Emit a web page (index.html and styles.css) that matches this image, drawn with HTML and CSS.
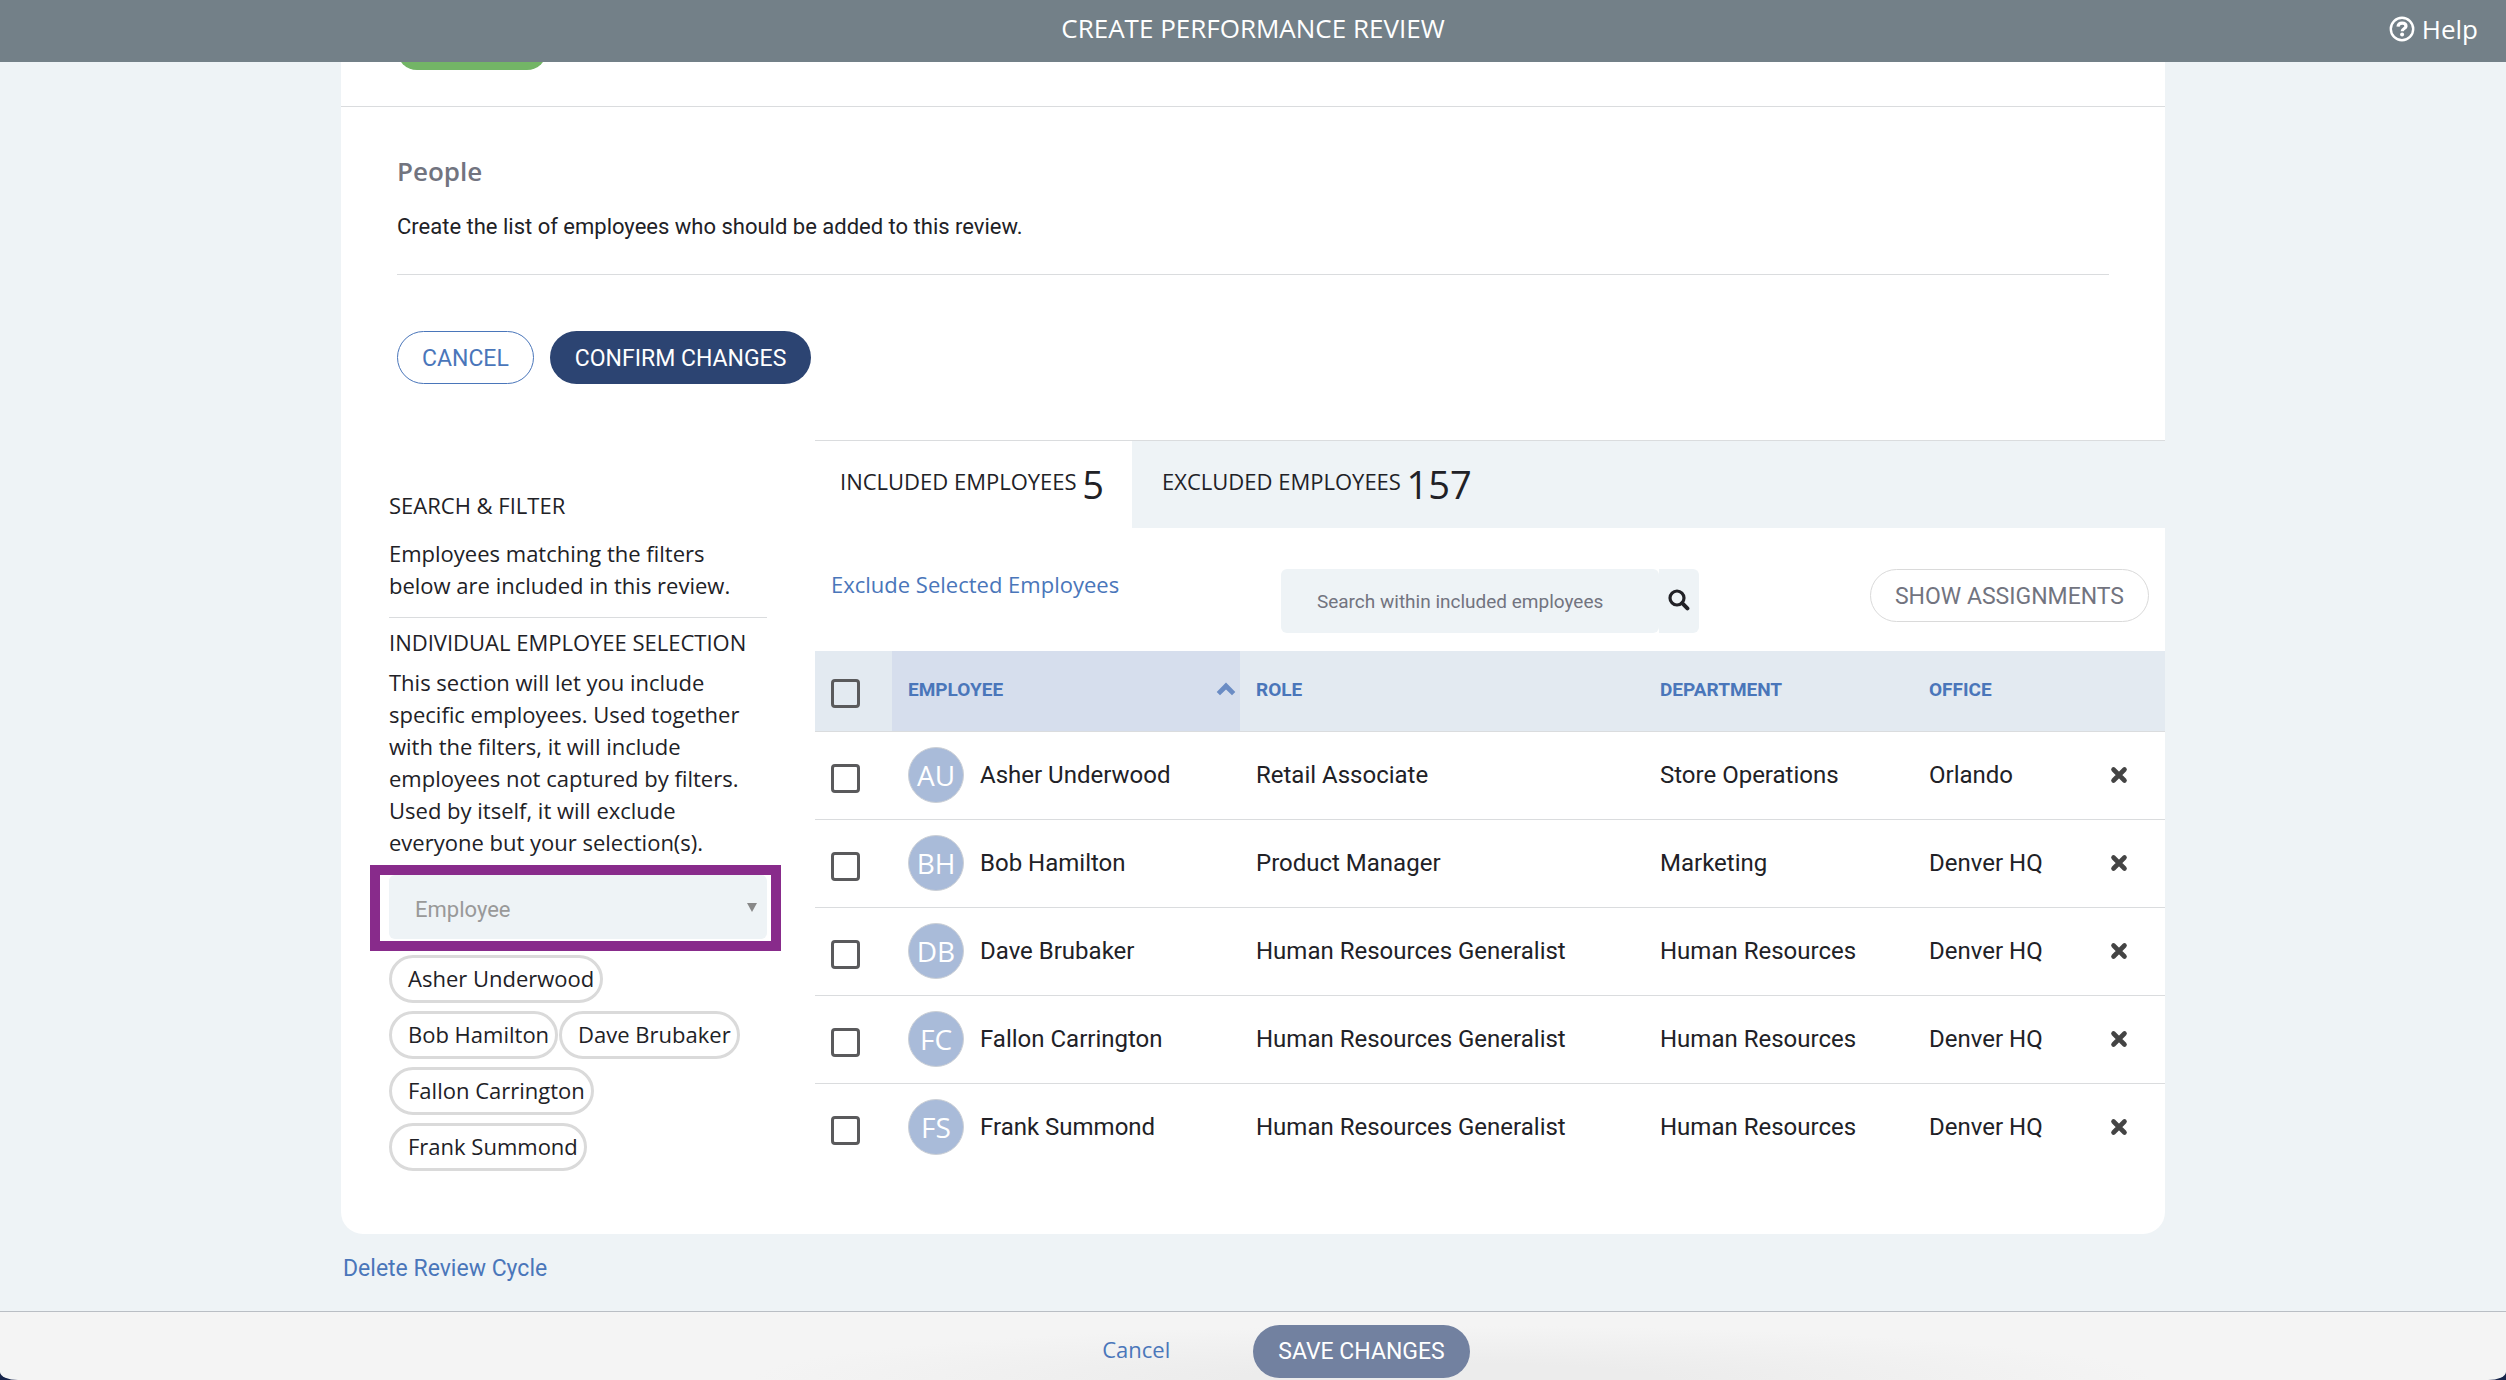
FILE: index.html
```html
<!DOCTYPE html>
<html lang="en">

<head>
    <meta charset="UTF-8">
    <meta name="viewport" content="width=device-width, initial-scale=1.0">
    <title>Create Performance Review</title>
    <link rel="stylesheet" href="styles.css">
</head>

<body>
    <svg width="0" height="0" class="sprite" aria-hidden="true">
        <symbol id="icon-x" viewBox="0 0 18 18">
            <path d="M3.5 3.5 L14.5 14.5 M14.5 3.5 L3.5 14.5" fill="none" stroke="currentColor" stroke-width="4.6" stroke-linecap="round" />
        </symbol>
    </svg>

    <header class="top-bar">
        <h1 class="top-title">CREATE PERFORMANCE REVIEW</h1>
        <a href="#" class="help-link">
            <svg width="26" height="26" viewBox="0 0 26 26" fill="none" stroke="currentColor" aria-hidden="true">
                <circle cx="13" cy="13" r="11.2" stroke-width="2.4" />
                <path d="M9 10.6 C9.3 8.1 11 7.2 13.1 7.2 C15.4 7.2 17 8.4 17 10.2 C17 12.6 13.2 12.4 13.2 15.2" stroke-width="3.2" />
                <circle cx="13.1" cy="18.6" r="2" fill="currentColor" stroke="none" />
            </svg>
            Help
        </a>
    </header>

    <main class="page">
        <div class="card">
            <div class="prev-section">
                <span class="green-btn"></span>
            </div>

            <section class="people">
                <h2 class="section-title">People</h2>
                <p class="section-text">Create the list of employees who should be added to this review.</p>
                <div class="actions">
                    <button type="button" class="btn btn-outline">CANCEL</button>
                    <button type="button" class="btn btn-primary">CONFIRM CHANGES</button>
                </div>
            </section>

            <div class="columns">
                <aside class="filters">
                    <h3 class="filter-title">SEARCH &amp; FILTER</h3>
                    <p class="filter-intro">Employees matching the filters below are included in this review.</p>
                    <h3 class="filter-title">INDIVIDUAL EMPLOYEE SELECTION</h3>
                    <p class="filter-text">This section will let you include specific employees. Used together with the filters, it will include employees not captured by filters. Used by itself, it will exclude everyone but your selection(s).</p>
                    <div class="highlight">
                        <select class="employee-select" aria-label="Employee">
                            <option>Employee</option>
                        </select>
                        <svg class="caret" width="10" height="9" viewBox="0 0 10 9" aria-hidden="true">
                            <path d="M0 0 H10 L5 9 Z" fill="#888" />
                        </svg>
                    </div>
                    <ul class="chips">
                        <li class="chip">Asher Underwood</li>
                        <li class="chip">Bob Hamilton</li>
                        <li class="chip">Dave Brubaker</li>
                        <li class="chip">Fallon Carrington</li>
                        <li class="chip">Frank Summond</li>
                    </ul>
                </aside>

                <section class="employees">
                    <nav class="tabs">
                        <a href="#" class="tab active">INCLUDED EMPLOYEES <span class="count">5</span></a>
                        <a href="#" class="tab">EXCLUDED EMPLOYEES <span class="count">157</span></a>
                    </nav>

                    <div class="toolbar">
                        <a href="#" class="exclude-link">Exclude Selected Employees</a>
                        <form class="search">
                            <input type="text" class="search-input" placeholder="Search within included employees" aria-label="Search within included employees">
                            <button type="submit" class="search-btn" aria-label="Search">
                                <svg width="22" height="22" viewBox="0 0 22 22" fill="none" stroke="currentColor" aria-hidden="true">
                                    <circle cx="9" cy="9" r="7" stroke-width="3.2" />
                                    <path d="M14.2 14.2 L19.4 19.4" stroke-width="4" stroke-linecap="round" />
                                </svg>
                            </button>
                        </form>
                        <button type="button" class="btn btn-grey">SHOW ASSIGNMENTS</button>
                    </div>

                    <table class="table">
                        <thead>
                            <tr>
                                <th class="col-check"><input type="checkbox" class="check" aria-label="Select all"></th>
                                <th class="col-employee">
                                    <div class="sort">
                                        EMPLOYEE
                                        <svg width="20" height="14" viewBox="0 0 20 14" aria-hidden="true">
                                            <path d="M10 0.5 L19.3 10 L16 13.3 L10 7.4 L4 13.3 L0.7 10 Z" fill="#6b8cc4" />
                                        </svg>
                                    </div>
                                </th>
                                <th class="col-role">ROLE</th>
                                <th class="col-dept">DEPARTMENT</th>
                                <th class="col-office">OFFICE</th>
                                <th></th>
                            </tr>
                        </thead>
                        <tbody>
                            <tr>
                                <td><input type="checkbox" class="check" aria-label="Select Asher Underwood"></td>
                                <td><div class="person"><span class="avatar">AU</span>Asher Underwood</div></td>
                                <td>Retail Associate</td>
                                <td>Store Operations</td>
                                <td>Orlando</td>
                                <td><button type="button" class="remove" aria-label="Remove Asher Underwood"><svg width="18" height="18"><use href="#icon-x" /></svg></button></td>
                            </tr>
                            <tr>
                                <td><input type="checkbox" class="check" aria-label="Select Bob Hamilton"></td>
                                <td><div class="person"><span class="avatar">BH</span>Bob Hamilton</div></td>
                                <td>Product Manager</td>
                                <td>Marketing</td>
                                <td>Denver HQ</td>
                                <td><button type="button" class="remove" aria-label="Remove Bob Hamilton"><svg width="18" height="18"><use href="#icon-x" /></svg></button></td>
                            </tr>
                            <tr>
                                <td><input type="checkbox" class="check" aria-label="Select Dave Brubaker"></td>
                                <td><div class="person"><span class="avatar">DB</span>Dave Brubaker</div></td>
                                <td>Human Resources Generalist</td>
                                <td>Human Resources</td>
                                <td>Denver HQ</td>
                                <td><button type="button" class="remove" aria-label="Remove Dave Brubaker"><svg width="18" height="18"><use href="#icon-x" /></svg></button></td>
                            </tr>
                            <tr>
                                <td><input type="checkbox" class="check" aria-label="Select Fallon Carrington"></td>
                                <td><div class="person"><span class="avatar">FC</span>Fallon Carrington</div></td>
                                <td>Human Resources Generalist</td>
                                <td>Human Resources</td>
                                <td>Denver HQ</td>
                                <td><button type="button" class="remove" aria-label="Remove Fallon Carrington"><svg width="18" height="18"><use href="#icon-x" /></svg></button></td>
                            </tr>
                            <tr>
                                <td><input type="checkbox" class="check" aria-label="Select Frank Summond"></td>
                                <td><div class="person"><span class="avatar">FS</span>Frank Summond</div></td>
                                <td>Human Resources Generalist</td>
                                <td>Human Resources</td>
                                <td>Denver HQ</td>
                                <td><button type="button" class="remove" aria-label="Remove Frank Summond"><svg width="18" height="18"><use href="#icon-x" /></svg></button></td>
                            </tr>
                        </tbody>
                    </table>
                </section>
            </div>
        </div>
        <a href="#" class="delete-link">Delete Review Cycle</a>
    </main>

    <footer class="bottom-bar">
        <a href="#" class="cancel-link">Cancel</a>
        <button type="button" class="btn btn-save">SAVE CHANGES</button>
    </footer>
</body>

</html>
```
FILE: styles.css
```css
* {
    margin: 0;
    padding: 0;
    box-sizing: border-box;
}

html {
    background: #16244a;
}

body {
    font-family: 'Open Sans', sans-serif;
    font-size: 22px;
    color: #212126;
    min-height: 100vh;
    display: flex;
    flex-direction: column;
}

a {
    color: #4a76ba;
    text-decoration: none;
}

.sprite {
    position: absolute;
}

/* top bar */
.top-bar {
    position: sticky;
    top: 0;
    z-index: 10;
    height: 62px;
    flex: none;
    background: #738088;
    color: #fff;
    display: grid;
    grid-template-columns: 1fr auto 1fr;
    align-items: center;
    padding: 0 28px 4px;
}

.top-title {
    grid-column: 2;
    font-size: 26px;
    line-height: 32px;
    font-weight: 400;
    padding-bottom: 2px;
}

.help-link {
    justify-self: end;
    display: flex;
    align-items: center;
    gap: 7px;
    color: #fff;
    font-size: 26px;
}

/* card */
.page {
    flex: 1;
    background: #eef3f6;
    padding: 0 24px 24px;
}

.card {
    max-width: 1824px;
    margin: 0 auto;
    background: #fff;
    border-radius: 0 0 22px 22px;
}

.prev-section {
    display: flex;
    height: 45px;
    border-bottom: 1px solid #dadcde;
    padding-left: 56px;
}

.green-btn {
    width: 150px;
    height: 53px;
    margin-top: -45px;
    border-radius: 20px;
    background: #73b566;
}

.people {
    padding: 45px 56px 56px;
}

.section-title {
    font-size: 26px;
    line-height: 38px;
    font-weight: 600;
    color: #72747f;
}

.section-text {
    font-family: Roboto, sans-serif;
    line-height: 32px;
    padding: 21px 0 31px;
    border-bottom: 1px solid #dadcde;
}

.actions {
    display: flex;
    gap: 16px;
    margin-top: 56px;
}

.btn {
    height: 53px;
    border-radius: 27px;
    border: 1px solid transparent;
    padding: 1px 24px 0;
    font-family: Roboto, sans-serif;
    font-size: 23px;
    cursor: pointer;
}

.btn-outline {
    background: #fff;
    border-color: #4a76ba;
    color: #4a76ba;
}

.btn-primary {
    background: #2c4472;
    color: #fff;
}

.btn-grey {
    background: #fff;
    border-color: #dadada;
    color: #72747f;
}

.columns {
    display: grid;
    grid-template-columns: 474px 1fr;
}

/* filters */
.filters {
    padding: 49px 48px 63px;
}

.filter-title {
    font-size: 22px;
    line-height: 32px;
    font-weight: 400;
    white-space: nowrap;
}

.filter-intro {
    line-height: 32px;
    padding: 16px 0;
    border-bottom: 1px solid #dadcde;
    margin-bottom: 8px;
}

.filter-text {
    line-height: 32px;
    padding: 8px 0 7px;
}

.highlight {
    position: relative;
    margin: 0 -14px 4px -19px;
    border: 10px solid #882b8b;
    padding: 0 4px 2px 9px;
}

.employee-select {
    display: block;
    width: 100%;
    height: 64px;
    appearance: none;
    border: none;
    border-radius: 6px;
    background: #eef3f6;
    padding: 4px 26px 0;
    font-family: Roboto, sans-serif;
    font-size: 22px;
    color: #999;
}

.caret {
    position: absolute;
    right: 14px;
    top: 28px;
}

.chips {
    list-style: none;
    display: flex;
    flex-wrap: wrap;
    gap: 8px 1px;
}

.chip {
    height: 48px;
    line-height: 40px;
    border: 3px solid #dadada;
    border-radius: 24px;
    padding: 0 6px 0 16px;
}

/* tabs */
.tabs {
    display: flex;
    height: 88px;
    border-top: 1px solid #dadcde;
    background: #eef3f6;
}

.tab {
    color: #212126;
    padding: 17px 30px 0;
}

.tab.active {
    background: #fff;
    padding: 17px 28px 0 25px;
}

.count {
    font-size: 38px;
    vertical-align: middle;
}

/* toolbar */
.toolbar {
    display: flex;
    align-items: flex-start;
    padding: 41px 16px 18px;
}

.exclude-link {
    line-height: 30px;
    margin-right: auto;
}

.search {
    display: flex;
    margin-right: 171px;
}

.search-input {
    width: 378px;
    height: 64px;
    border: none;
    border-radius: 6px;
    background: #eef3f6;
    padding: 0 36px;
    font-family: Roboto, sans-serif;
    font-size: 19px;
}

.search-input::placeholder {
    color: #72747f;
}

.search-btn {
    width: 40px;
    border: none;
    border-radius: 0 6px 6px 0;
    background: #eef3f6;
    color: #212126;
    cursor: pointer;
}

/* table */
.table {
    width: 100%;
    table-layout: fixed;
    border-collapse: collapse;
    font-family: Roboto, sans-serif;
    font-size: 24px;
}

.table th {
    height: 80px;
    background: #e3eaf1;
    border-bottom: 1px solid #dadcde;
    padding: 0 16px 3px;
    text-align: left;
    font-size: 19px;
    color: #4a76ba;
}

.table td {
    height: 88px;
    padding: 0 16px 1px;
    border-bottom: 1px solid #dadcde;
    white-space: nowrap;
}

.table tbody tr:last-child td {
    border-bottom: none;
}

.col-check {
    width: 77px;
}

.table .col-employee {
    width: 348px;
    background: #d6deed;
    padding-right: 4px;
}

.col-role {
    width: 404px;
}

.col-dept {
    width: 269px;
}

.col-office {
    width: 181px;
}

.sort {
    display: flex;
    justify-content: space-between;
    align-items: center;
}

.check {
    display: block;
    appearance: none;
    width: 29px;
    height: 29px;
    margin-top: 8px;
    border: 3px solid #5a5a5c;
    border-radius: 4px;
}

.person {
    display: flex;
    align-items: center;
    gap: 16px;
}

.avatar {
    width: 56px;
    height: 56px;
    line-height: 54px;
    border: 1px solid #ccd0d6;
    border-radius: 50%;
    background: #a9bbd9;
    color: #fff;
    font-family: 'Open Sans', sans-serif;
    font-size: 28px;
    text-align: center;
}

.remove {
    display: block;
    border: none;
    background: none;
    color: #444;
    cursor: pointer;
}

.remove svg {
    display: block;
}

.delete-link {
    display: block;
    max-width: 1824px;
    margin: 19px auto 0;
    padding-left: 2px;
    font-family: Roboto, sans-serif;
    font-size: 23px;
    line-height: 32px;
}

/* bottom bar */
.bottom-bar {
    display: flex;
    justify-content: center;
    align-items: center;
    gap: 83px;
    height: 69px;
    flex: none;
    padding: 12px 0 2px 66px;
    border-top: 1px solid #b9bec4;
    background: radial-gradient(ellipse 28% 80% at 58% 100%, #ececec 30%, #f4f4f4);
    border-radius: 0 0 18px 18px / 0 0 8px 8px;
}

.cancel-link {
    padding-bottom: 5px;
}

.btn-save {
    background: #7281a0;
    color: #fff;
}
```
